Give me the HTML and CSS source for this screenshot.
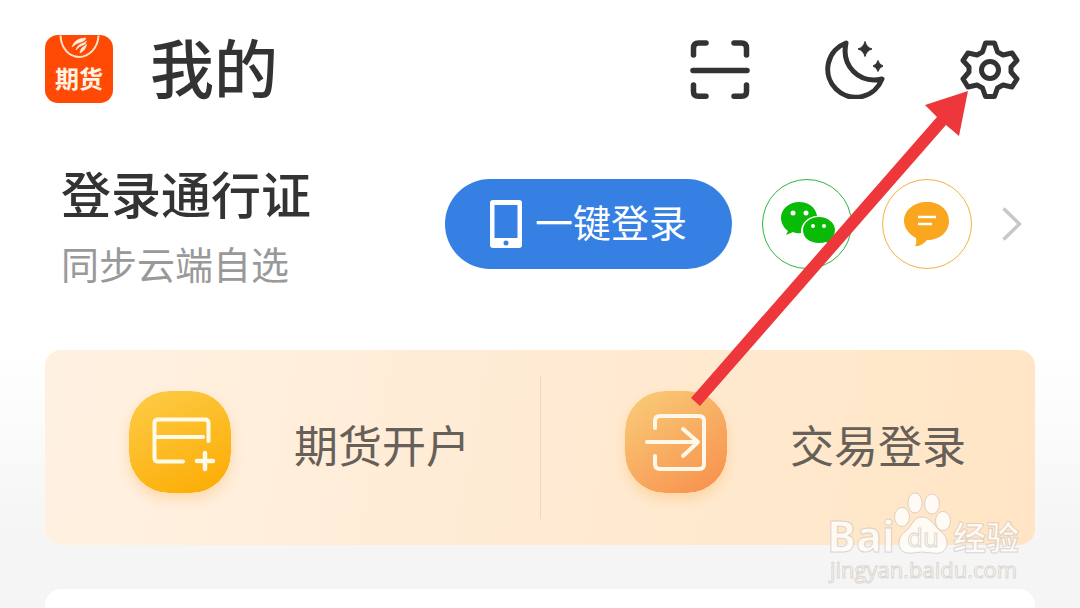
FILE: index.html
```
<!DOCTYPE html>
<html lang="zh-CN">
<head>
    <meta charset="UTF-8">
    <meta name="viewport" content="width=device-width, initial-scale=1">
    <title>我的</title>
    <link rel="stylesheet" href="styles.css">
</head>
<body>
    <div class="page">
        <header class="header">
            <svg class="logo" viewBox="0 0 68 68" aria-hidden="true">
                <rect width="68" height="68" rx="13" fill="#ff4a05"/>
                <path d="M15.500 0.500C16 13 24 22 34 22S53 13 53.500 0.500" fill="none" stroke="#ffe3c8" stroke-width="2"/>
                <path d="M41 3C34 3 29 6 27 12Q31 8 36 7Q40 6 41 3ZM41.500 6C39 9 33 8 31 15Q34 11 38 10Q41 9 41.500 6ZM41.500 9C40 12 36 11 35 18Q41 15 41.500 9Z" fill="#fff3e4" stroke="#fff3e4" stroke-width="0.600"/>
                <text class="logo-text" x="34" y="53" text-anchor="middle">期货</text>
            </svg>
            <h1>我的</h1>
            <nav class="tools">
                <button type="button" class="icon-button" aria-label="扫一扫">
                    <svg viewBox="0 0 60 60" fill="none" stroke="#333" stroke-width="5.500" stroke-linecap="round" stroke-linejoin="round">
                        <path d="M3.500 16V9Q3.500 4 8.500 4H16M44 4H51.500Q56.500 4 56.500 9V16M3.500 46V53Q3.500 57.250 8.500 57.250H16M44 57.250H51.500Q56.500 57.250 56.500 53V46M3 31.500H57"/>
                    </svg>
                </button>
                <button type="button" class="icon-button" aria-label="夜间模式">
                    <svg viewBox="0 0 60 60" fill="none" stroke="#333" stroke-width="5" stroke-linejoin="round">
                        <path d="M21 4A28 28 0 1 0 57 40C34 45 16 27 21 4Z"/>
                        <path d="M40 2.500Q41.500 8.500 47 10Q41.500 11.500 40 17.500Q38.500 11.500 33 10Q38.500 8.500 40 2.500ZM53 21.500Q54 25.500 58 27Q54 28.500 53 32.500Q52 28.500 48 27Q52 25.500 53 21.500Z" fill="#333" stroke="#333" stroke-width="1"/>
                    </svg>
                </button>
                <button type="button" class="icon-button" aria-label="设置">
                    <svg viewBox="0 0 60 60" fill="none" stroke="#333" stroke-width="5" stroke-linejoin="round">
                        <path d="M25.500 4H34.500L37.500 13L43 16L52 14L57 21.500L51 28V33L57 40L52 48L43 46L37.500 49L34.500 57.500H25.500L22.500 49L17 46L8 48L3 40L9 33V28L3 21.500L8 14L17 16L22.500 13Z"/>
                        <circle cx="30" cy="31" r="8.500"/>
                    </svg>
                </button>
            </nav>
        </header>

        <section class="account">
            <div class="account-info">
                <h2>登录通行证</h2>
                <p>同步云端自选</p>
            </div>
            <div class="login-options">
                <button type="button" class="quick-login">
                    <svg viewBox="0 0 32 48" aria-hidden="true">
                        <path d="M3 0H29Q32 0 32 3V45Q32 48 29 48H3Q0 48 0 45V3Q0 0 3 0ZM4.500 5V38H27.500V5ZM16 40.500A2.500 2.500 0 1 0 16 45.500A2.500 2.500 0 1 0 16 40.500Z" fill="#fff" fill-rule="evenodd"/>
                    </svg>
                    <span>一键登录</span>
                </button>
                <button type="button" class="round-button wechat" aria-label="微信登录">
                    <svg viewBox="0 0 88 88">
                        <path d="M36 22C26 22 18 29 18 38C18 43 21 48 25 51L23 55L30 52Q34 54 38 53C37 44 45 36 54 36C53 28 46 22 36 22Z" fill="#09bb07"/>
                        <path d="M56 37C47 37 40 43 40 50C40 58 47 63 56 63Q60 63 63 62L69 65L67 60C70 57 72 54 72 50C72 43 65 37 56 37Z" fill="#09bb07"/>
                        <g fill="#fff">
                            <circle cx="30" cy="33" r="2.500"/>
                            <circle cx="43" cy="33" r="2.500"/>
                            <circle cx="50" cy="46" r="2"/>
                            <circle cx="61" cy="46" r="2"/>
                        </g>
                    </svg>
                </button>
                <button type="button" class="round-button message" aria-label="短信登录">
                    <svg viewBox="0 0 88 88">
                        <path d="M44 22C31 22 21 30 21 41C21 48 26 54 33 58Q34 63 32 66C38 66 40 64 44 60C57 60 66 52 66 41C66 30 57 22 44 22Z" fill="#faa61e"/>
                        <path d="M35 37H53M35 44H49" stroke="#fff" stroke-width="2.500"/>
                    </svg>
                </button>
                <a class="more" href="#" aria-label="更多">
                    <svg viewBox="0 0 20 34" fill="none" stroke="#c8c8c8" stroke-width="3.500">
                        <path d="M1.500 1.500L17.500 17L1.500 32.500"/>
                    </svg>
                </a>
            </div>
        </section>

        <section class="services">
            <a class="service" href="#">
                <svg class="service-icon" viewBox="0 0 102 102" aria-hidden="true">
                    <defs>
                        <linearGradient id="gold" x1="0.200" y1="0" x2="0.700" y2="1">
                            <stop offset="0" stop-color="#fdca43"/>
                            <stop offset="1" stop-color="#fcae08"/>
                        </linearGradient>
                    </defs>
                    <rect width="102" height="102" rx="40" fill="url(#gold)"/>
                    <path d="M54 70.500H29Q25.500 70.500 25.500 67V32Q25.500 28.500 29 28.500H76Q79.500 28.500 79.500 32V50M26 46H74" fill="none" stroke="#fffbe8" stroke-width="4" stroke-linecap="round"/>
                    <path d="M68 70H84M76 62V78" stroke="#fffbe8" stroke-width="4.500" stroke-linecap="round"/>
                </svg>
                <span>期货开户</span>
            </a>
            <a class="service trade" href="#">
                <svg class="service-icon" viewBox="0 0 102 102" aria-hidden="true">
                    <defs>
                        <linearGradient id="orange" x1="0.100" y1="0" x2="0.800" y2="1">
                            <stop offset="0" stop-color="#f9cb78"/>
                            <stop offset="1" stop-color="#f7934f"/>
                        </linearGradient>
                    </defs>
                    <rect width="102" height="102" rx="40" fill="url(#orange)"/>
                    <path d="M30 37V30Q30 25 35 25H74Q79 25 79 30V73Q79 78 74 78H35Q30 78 30 73V65M22 51H73M58 38L73 51L58 65" fill="none" stroke="#fff8e8" stroke-width="4" stroke-linecap="round" stroke-linejoin="round"/>
                </svg>
                <span>交易登录</span>
            </a>
        </section>

        <section class="next-card"></section>

        <svg class="pointer" viewBox="0 0 280 318" aria-hidden="true">
            <path d="M278 1L235 15L247 27L1 308L10 316L256 35L269 46Z" fill="#ee373a"/>
        </svg>

        <svg class="watermark" viewBox="0 0 200 96" aria-hidden="true">
            <g fill="#fff" fill-opacity="0.800" stroke="#c8bdb0" stroke-opacity="0.600">
                <text class="mark-latin" x="-1" y="62">Bai</text>
                <ellipse cx="74" cy="27" rx="7.500" ry="9.500"/>
                <ellipse cx="87" cy="13" rx="7" ry="10"/>
                <ellipse cx="104" cy="14" rx="7.500" ry="10"/>
                <ellipse cx="115" cy="31" rx="7.500" ry="9.500"/>
                <path d="M94 27C86 27 85 34 80 39C74 44 71 47 71 53C71 61 77 64 84 63Q94 61 105 63C113 65 119 60 119 53C119 46 114 43 110 39C105 34 102 27 94 27Z"/>
                <text class="mark-du" x="79" y="57">du</text>
                <text class="mark-cjk" x="125" y="60">经验</text>
                <text class="mark-url" x="2" y="88">jingyan.baidu.com</text>
            </g>
        </svg>
    </div>
</body>
</html>
```
FILE: styles.css
```
* {
    box-sizing: border-box;
}

body {
    margin: 0;
    font-family: "Noto Sans CJK SC", sans-serif;
    color: #333;
    background: #fff;
}

.page {
    position: relative;
    display: flex;
    flex-direction: column;
    min-height: 100vh;
    padding: 29px 45px 0;
    background: linear-gradient(#fff 350px, #f5f5f6 540px);
}

svg {
    display: block;
}

h1, h2, p {
    margin: 0;
}

button {
    padding: 0;
    border: none;
    background: none;
    font-family: inherit;
    cursor: pointer;
}

a {
    color: inherit;
    text-decoration: none;
}

/* Top bar */
.header {
    display: flex;
    align-items: center;
    height: 80px;
    padding-right: 15px;
}

.logo {
    width: 68px;
    height: 68px;
}

.logo-text {
    font-size: 24px;
    font-weight: 700;
    fill: #fff3e4;
}

h1 {
    margin-left: 37px;
    padding-bottom: 8px;
    font-size: 64px;
    line-height: 72px;
    font-weight: 500;
}

.tools {
    display: flex;
    gap: 75px;
    margin-left: auto;
}

.icon-button {
    width: 60px;
    height: 60px;
}

/* Account row */
.account {
    display: flex;
    justify-content: space-between;
    margin-top: 50px;
    padding: 0 13px 0 16px;
}

h2 {
    font-size: 50px;
    line-height: 66px;
    font-weight: 500;
}

.account-info p {
    margin-top: 10px;
    font-size: 38px;
    line-height: 56px;
    color: #999;
}

.login-options {
    display: flex;
    gap: 30px;
    height: 90px;
    margin-top: 20px;
}

.quick-login {
    display: flex;
    align-items: center;
    justify-content: center;
    gap: 13px;
    width: 287px;
    border-radius: 45px;
    background: #3580e2;
    color: #fff;
    font-size: 38px;
}

.quick-login span {
    padding-bottom: 8px;
}

.quick-login svg {
    width: 32px;
    height: 48px;
}

.round-button {
    width: 90px;
    height: 90px;
    border: 1px solid;
    border-radius: 50%;
}

.wechat {
    border-color: #2fb344;
}

.message {
    border-color: #f3b13f;
}

.more {
    display: flex;
    align-items: center;
}

.more svg {
    width: 20px;
    height: 34px;
}

/* Service card */
.services {
    display: grid;
    grid-template-columns: 1fr 1fr;
    height: 195px;
    margin-top: 59px;
    border-radius: 16px;
    background: linear-gradient(100deg, #fff1e2, #ffe5c5);
}

.service {
    position: relative;
    display: flex;
    align-items: center;
    gap: 63px;
    padding: 0 0 12px 84px;
    font-size: 44px;
    color: #666059;
}

.service span {
    padding-top: 4px;
}

.trade {
    padding-left: 85px;
}

.trade::before {
    content: '';
    position: absolute;
    left: 0;
    top: 26px;
    bottom: 26px;
    width: 1px;
    background: #f6d6b2;
}

.service-icon {
    width: 102px;
    height: 102px;
    border-radius: 40px;
    box-shadow: 0 6px 12px rgba(250, 170, 60, 0.3);
}

.next-card {
    flex: 1;
    margin-top: 44px;
    border-radius: 16px 16px 0 0;
    background: #fff;
}

/* Arrow and watermark lie over the page */
.pointer {
    position: absolute;
    top: 90px;
    right: 110px;
    width: 280px;
    height: 318px;
    pointer-events: none;
}

.watermark {
    position: absolute;
    top: 490px;
    right: 52px;
    width: 200px;
    height: 96px;
    pointer-events: none;
}

.mark-latin {
    font: 700 43px "Open Sans", sans-serif;
}

.mark-du {
    font: 400 26px "Open Sans", sans-serif;
}

.mark-cjk {
    font-size: 33px;
    font-weight: 700;
}

.mark-url {
    font: 400 22px "Open Sans", sans-serif;
}
```
